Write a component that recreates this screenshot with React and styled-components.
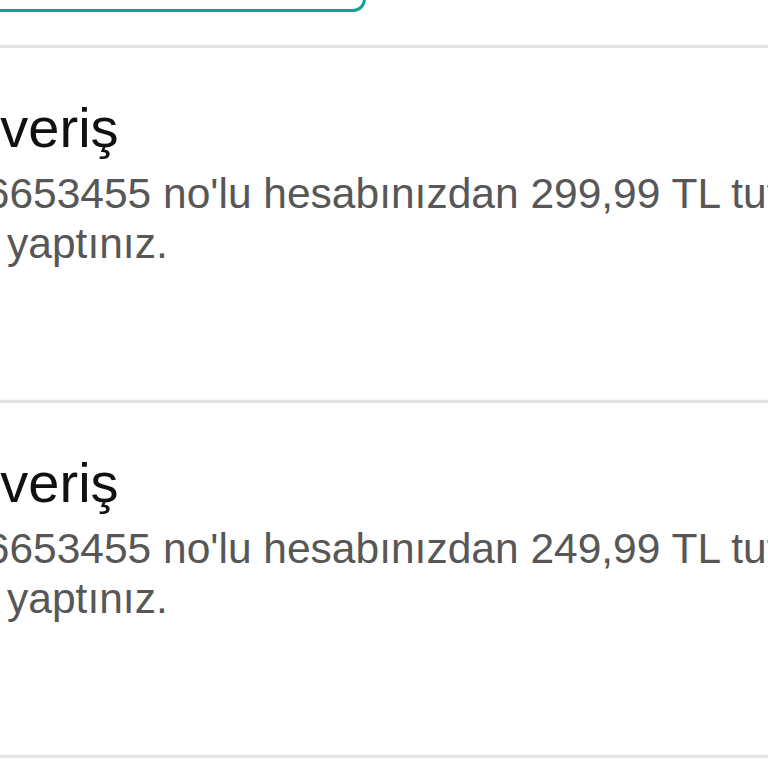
import React from 'react'
import styled, { createGlobalStyle } from 'styled-components'

const GlobalStyle = createGlobalStyle`
  html, body {
    margin: 0;
    padding: 0;
    background: #fff;
    font-family: 'Liberation Sans', Arial, Helvetica, sans-serif;
  }
`

const Screen = styled.div`
  width: 768px;
  height: 768px;
  overflow: hidden;
  background: #fff;
`

const Header = styled.div`
  height: 45px;
  overflow: hidden;
`

const FilterBox = styled.div`
  margin-top: -50px;
  margin-left: -100px;
  width: 466px;
  height: 62px;
  box-sizing: border-box;
  border: 3.5px solid #14a096;
  border-radius: 13px;
`

const List = styled.div`
  display: flex;
  flex-direction: column;
`

const Card = styled.div`
  height: 355px;
  box-sizing: border-box;
  border-top: 3px solid #e3e3e3;
  box-shadow: 0 -1px 1px rgba(0, 0, 0, 0.03);
  padding: 50px 0 0;
  overflow: hidden;
`

const Content = styled.div`
  margin-left: -93px;
  width: 1030px;
`

const Title = styled.div`
  font-size: 56px;
  line-height: 60px;
  color: #111;
`

const Body = styled.p`
  margin: 11px 0 0 8px;
  font-size: 42.5px;
  line-height: 50px;
  color: #575757;
`

const transactions = [
  { id: 1, title: 'Alışveriş', account: 'TR-6653455', amount: '299,99' },
  { id: 2, title: 'Alışveriş', account: 'TR-6653455', amount: '249,99' },
  { id: 3, title: 'Alışveriş', account: 'TR-6653455', amount: '199,99' },
]

const App = () => {
  return (
    <Screen>
      <GlobalStyle />
      <Header>
        <FilterBox />
      </Header>
      <List>
        {transactions.map((t) => (
          <Card key={t.id}>
            <Content>
              <Title>{t.title}</Title>
              <Body>
                {t.account} no'lu hesabınızdan {t.amount} TL tutarında alım
                yaptınız.
              </Body>
            </Content>
          </Card>
        ))}
      </List>
    </Screen>
  )
}

export default App
